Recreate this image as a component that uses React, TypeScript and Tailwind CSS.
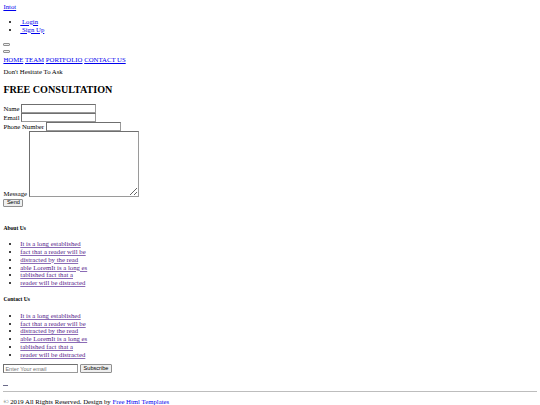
import React from 'react';

const links = [
  'It is a long established',
  'fact that a reader will be',
  'distracted by the read',
  'able LoremIt is a long es',
  'tablished fact that a',
  'reader will be distracted',
];

const FooterList: React.FC<{ title: string }> = ({ title }) => (
  <div>
    <h5 className="text-[5.6px] font-bold leading-[6.5px] mt-[9.4px] mb-[9.4px]">{title}</h5>
    <ul className="list-disc pl-[16.9px] leading-[7.7px]">
      {links.map((t) => (
        <li key={t}>
          <a href="#" className="text-[#551A8B] underline decoration-[#8a6bb5]">{t}</a>
        </li>
      ))}
    </ul>
  </div>
);

const App: React.FC = () => {
  return (
    <div className="min-h-screen bg-white text-black font-['Liberation_Serif',serif] text-[6.75px] leading-[7.76px] px-[3.4px] pt-[3.4px]">
      {/* Header */}
      <div>
        <a href="#" className="text-[#0000EE] underline">Intot</a>
      </div>
      <ul className="list-disc pl-[16.9px] my-[6.75px]">
        <li>
          <a href="#" className="text-[#0000EE] underline">&nbsp;Login</a>
        </li>
        <li>
          <a href="#" className="text-[#0000EE] underline">&nbsp;Sign Up</a>
        </li>
      </ul>
      <div className="h-[7.76px] flex items-center">
        <button className="w-[7px] h-[3px] border border-[#8f8f8f] bg-[#efefef] rounded-[1px]" />
      </div>
      <div className="h-[7.76px] flex items-center">
        <button className="w-[7px] h-[3px] border border-[#8f8f8f] bg-[#efefef] rounded-[1px]" />
      </div>
      <nav className="flex gap-[1.7px]">
        <a href="#" className="text-[#0000EE] underline">HOME</a>
        <a href="#" className="text-[#0000EE] underline">TEAM</a>
        <a href="#" className="text-[#0000EE] underline">PORTFOLIO</a>
        <a href="#" className="text-[#0000EE] underline">CONTACT US</a>
      </nav>

      {/* Consultation form */}
      <p className="mt-[4.5px]">Don't Hesitate To Ask</p>
      <h2 className="text-[10.1px] font-bold leading-[11.6px] my-[8.4px]">FREE CONSULTATION</h2>
      <form className="flex flex-col items-start">
        <div className="flex items-center gap-[1.7px] h-[9px]">
          <label>Name</label>
          <input className="w-[75px] h-[9px] border border-[#9a9a9a] border-t-[#6f6f6f] border-l-[#6f6f6f] bg-white" />
        </div>
        <div className="flex items-center gap-[1.7px] h-[9px]">
          <label>Email</label>
          <input className="w-[75px] h-[9px] border border-[#9a9a9a] border-t-[#6f6f6f] border-l-[#6f6f6f] bg-white" />
        </div>
        <div className="flex items-center gap-[1.7px] h-[9px]">
          <label>Phone Number</label>
          <input className="w-[75px] h-[9px] border border-[#9a9a9a] border-t-[#6f6f6f] border-l-[#6f6f6f] bg-white" />
        </div>
        <div className="flex items-end gap-[1.7px]">
          <label className="leading-[7px]">Message</label>
          <textarea className="w-[110px] h-[66px] border border-[#9a9a9a] border-t-[#6f6f6f] border-l-[#6f6f6f] bg-white" />
        </div>
        <button
          type="button"
          className="mt-[1.5px] h-[8px] px-[2.5px] border border-[#8f8f8f] bg-[#efefef] rounded-[1px] font-['Liberation_Sans',sans-serif] text-[5.6px] leading-none"
        >
          Send
        </button>
      </form>

      {/* Footer columns */}
      <div className="mt-[18px]">
        <FooterList title="About Us" />
        <FooterList title="Contact Us" />
      </div>

      {/* Subscribe */}
      <div className="flex items-center gap-[1.7px] mt-[6px]">
        <input
          placeholder="Enter Your email"
          className="w-[75px] h-[9px] border border-[#9a9a9a] border-t-[#6f6f6f] border-l-[#6f6f6f] bg-white px-[1px] font-['Liberation_Sans',sans-serif] text-[5.6px] placeholder:text-[#757575]"
        />
        <button
          type="button"
          className="h-[9px] px-[2.5px] border border-[#8f8f8f] bg-[#efefef] rounded-[1px] font-['Liberation_Sans',sans-serif] text-[5.6px] leading-none"
        >
          Subscribe
        </button>
      </div>
      <div className="mt-[12px] w-[5px] h-px bg-[#6b6b8a]" />
      <hr className="mt-[5px] border-t border-[#bdbdbd]" />
      <p className="mt-[5.5px]">
        © 2019 All Rights Reserved. Design by{' '}
        <a href="#" className="text-[#0000EE] underline">Free Html Templates</a>
      </p>
    </div>
  );
};

export default App;
